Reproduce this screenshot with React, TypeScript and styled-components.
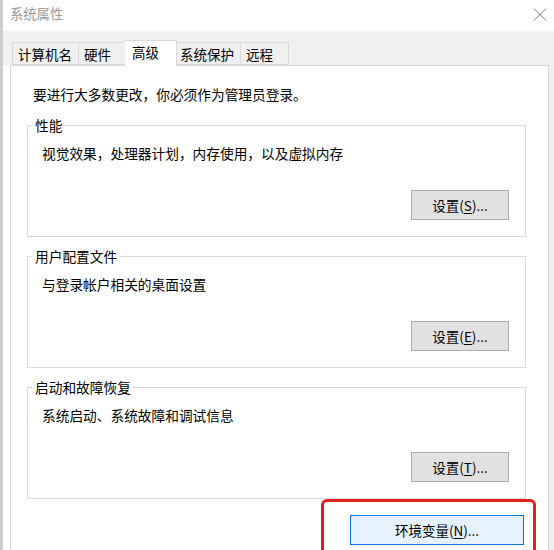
import React from "react";
import styled, { createGlobalStyle } from "styled-components";

const Global = createGlobalStyle`
  html, body { margin: 0; padding: 0; background: #ffffff; }
  body {
    font-family: "Microsoft YaHei UI", "Noto Sans CJK SC", "Noto Sans", sans-serif;
    color: #000;
  }
  * { box-sizing: border-box; }
`;

const Window = styled.div`
  width: 554px;
  height: 550px;
  overflow: hidden;
  display: flex;
  flex-direction: column;
  background: #ffffff;
  border-left: 3px solid #cdcdcd;
`;

const TitleBar = styled.div`
  height: 31px;
  flex: none;
  display: flex;
  align-items: center;
  justify-content: space-between;
  padding: 0 7px 3px 7px;
  background: #ffffff;
`;

const Title = styled.span`
  font-size: 13.3px;
  line-height: 18px;
  color: #9a9a9a;
`;

const CloseButton = styled.span`
  display: flex;
  width: 14px;
  height: 13px;
  color: #7a7a7a;
`;

const TabStrip = styled.div`
  height: 34px;
  flex: none;
  display: flex;
  align-items: flex-end;
  padding-left: 9px;
  background: #f0f0f0;
  position: relative;
  z-index: 1;
`;

const Tab = styled.div<{ $active?: boolean }>`
  min-width: ${(p) => (p.$active ? "52px" : "48px")};
  height: ${(p) => (p.$active ? "26px" : "23px")};
  margin: ${(p) => (p.$active ? "0 -2px -1px -2px" : "0")};
  padding: ${(p) => (p.$active ? "1px 6px 0 7px" : "1px 6px 0 5px")};
  display: flex;
  align-items: ${(p) => (p.$active ? "flex-start" : "center")};
  font-size: 13.5px;
  line-height: 20px;
  color: #000;
  background: ${(p) => (p.$active ? "#ffffff" : "#f0f0f0")};
  border: 1px solid #d9d9d9;
  border-bottom: ${(p) => (p.$active ? "none" : "1px solid #d9d9d9")};
  position: relative;
  z-index: ${(p) => (p.$active ? 2 : 0)};
  & + & { border-left: none; }
`;

const ContentRow = styled.div`
  flex: 1;
  display: flex;
  min-height: 0;
`;

const Gutter = styled.div<{ $side: "left" | "right" }>`
  flex: none;
  width: ${(p) => (p.$side === "left" ? "7px" : "5px")};
  background: ${(p) => (p.$side === "left" ? "#ffffff" : "#f0f0f0")};
`;

const Panel = styled.div`
  flex: 1;
  display: flex;
  flex-direction: column;
  background: #ffffff;
  border: 1px solid #d9d9d9;
  border-bottom: none;
  padding: 18px 22px 0 16px;
`;

const Intro = styled.p`
  flex: none;
  margin: 0 0 12px 0;
  padding-left: 6px;
  font-size: 13.7px;
  line-height: 20px;
`;

const Group = styled.fieldset`
  flex: none;
  margin: 0 0 10px 0;
  padding: 0;
  min-width: 0;
  height: 121px;
  border: 1px solid #dcdcdc;
`;

const GroupLegend = styled.legend`
  margin-left: 5px;
  padding: 0 2px;
  font-size: 13.7px;
  line-height: 18px;
  color: #000;
`;

const GroupBody = styled.div`
  padding: 9px 16px 0 14px;
  display: flex;
  flex-direction: column;
`;

const Description = styled.div`
  font-size: 13.7px;
  line-height: 20px;
`;

const ButtonRow = styled.div`
  display: flex;
  justify-content: flex-end;
  margin-top: 27px;
`;

const Button = styled.button<{ $primary?: boolean }>`
  width: ${(p) => (p.$primary ? "174px" : "98px")};
  height: 30px;
  padding: 0;
  font-family: inherit;
  font-size: 13.5px;
  line-height: 18px;
  color: #000;
  background: ${(p) => (p.$primary ? "#e5f1fb" : "#e1e1e1")};
  border: 1px solid ${(p) => (p.$primary ? "#0078d7" : "#adadad")};
  border-radius: 0;
  u { text-underline-offset: 2px; }
`;

const Footer = styled.div`
  flex: none;
  display: flex;
  justify-content: flex-end;
  margin-top: -10px;
  margin-right: -10px;
`;

const Highlight = styled.div`
  border: 3px solid #e3201c;
  border-radius: 6px;
  padding: 13px 9px 24px 26px;
`;

const groups = [
  { title: "性能", desc: "视觉效果，处理器计划，内存使用，以及虚拟内存", key: "S" },
  { title: "用户配置文件", desc: "与登录帐户相关的桌面设置", key: "E" },
  { title: "启动和故障恢复", desc: "系统启动、系统故障和调试信息", key: "T" },
];

const tabs = ["计算机名", "硬件", "高级", "系统保护", "远程"];

export default function App() {
  return (
    <>
      <Global />
      <Window>
        <TitleBar>
          <Title>系统属性</Title>
          <CloseButton>
            <svg width="14" height="13" viewBox="0 0 14 13">
              <path d="M1 0.5 L13 12.5 M13 0.5 L1 12.5" stroke="currentColor" strokeWidth="1" fill="none" />
            </svg>
          </CloseButton>
        </TitleBar>
        <TabStrip>
          {tabs.map((t) => (
            <Tab key={t} $active={t === "高级"}>
              {t}
            </Tab>
          ))}
        </TabStrip>
        <ContentRow>
          <Gutter $side="left" />
          <Panel>
            <Intro>要进行大多数更改，你必须作为管理员登录。</Intro>
            {groups.map((g) => (
              <Group key={g.title}>
                <GroupLegend>{g.title}</GroupLegend>
                <GroupBody>
                  <Description>{g.desc}</Description>
                  <ButtonRow>
                    <Button>
                      设置(<u>{g.key}</u>)...
                    </Button>
                  </ButtonRow>
                </GroupBody>
              </Group>
            ))}
            <Footer>
              <Highlight>
                <Button $primary>
                  环境变量(<u>N</u>)...
                </Button>
              </Highlight>
            </Footer>
          </Panel>
          <Gutter $side="right" />
        </ContentRow>
      </Window>
    </>
  );
}
